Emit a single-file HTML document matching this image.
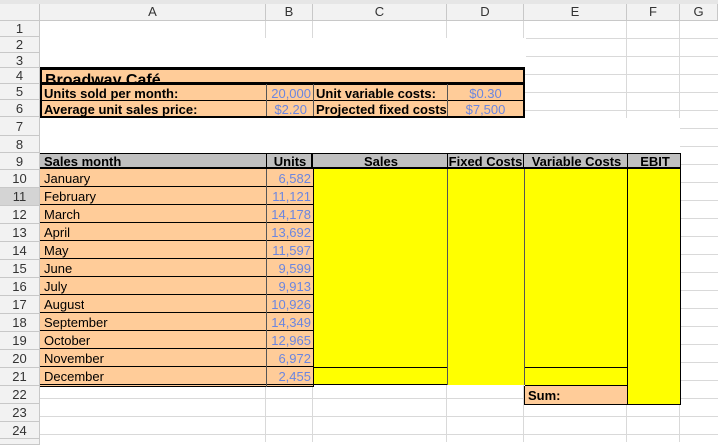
<!DOCTYPE html><html><head><style>
body{margin:0;width:718px;height:442px;overflow:hidden;background:#fff;font-family:"Liberation Sans",sans-serif;position:relative}
div{position:absolute;box-sizing:border-box}
.h{background:#f2f2f2;border-right:1px solid #c8c8c8;border-bottom:1px solid #c8c8c8;color:#333;font-size:13px;text-align:center}
.gl{background:#d4d4d4}
.c{font-size:13px;white-space:nowrap;overflow:hidden;padding-left:2px;line-height:17px}
.o{background:#ffcc99}
.y{background:#ffff00}
.g{background:#c0c0c0}
.n{color:#6b86e0;text-align:right;padding-right:2px}
.b{font-weight:bold}
</style></head><body>
<div style="left:40px;top:21px;width:678px;height:421px;background:
repeating-linear-gradient(to bottom,transparent 0,transparent 17px,#d9d9d9 17px,#d9d9d9 18px)"></div>
<div style="left:265px;top:21px;width:1px;height:421px;background:#d9d9d9"></div>
<div style="left:312px;top:21px;width:1px;height:421px;background:#d9d9d9"></div>
<div style="left:446px;top:21px;width:1px;height:421px;background:#d9d9d9"></div>
<div style="left:523px;top:21px;width:1px;height:421px;background:#d9d9d9"></div>
<div style="left:626px;top:21px;width:1px;height:421px;background:#d9d9d9"></div>
<div style="left:679px;top:21px;width:1px;height:421px;background:#d9d9d9"></div>
<div style="left:40px;top:38px;width:486px;height:30px;background:#fff"></div>
<div style="left:40px;top:118px;width:640px;height:35px;background:#fff"></div>
<div class="h" style="left:0;top:0;width:718px;height:4px;background:#e6e6e6;border:0"></div>
<div class="h" style="left:0;top:4px;width:40px;height:17px"></div>
<div class="h" style="left:40px;top:4px;width:226px;height:17px">A</div>
<div class="h" style="left:266px;top:4px;width:47px;height:17px">B</div>
<div class="h" style="left:313px;top:4px;width:134px;height:17px">C</div>
<div class="h" style="left:447px;top:4px;width:77px;height:17px">D</div>
<div class="h" style="left:524px;top:4px;width:103px;height:17px">E</div>
<div class="h" style="left:627px;top:4px;width:53px;height:17px">F</div>
<div class="h" style="left:680px;top:4px;width:38px;height:17px">G</div>
<div class="h" style="left:0;top:21px;width:40px;height:16px;line-height:16px">1</div>
<div class="h" style="left:0;top:37px;width:40px;height:16px;line-height:16px">2</div>
<div class="h" style="left:0;top:53px;width:40px;height:15px;line-height:15px">3</div>
<div class="h" style="left:0;top:68px;width:40px;height:16px;line-height:16px">4</div>
<div class="h" style="left:0;top:84px;width:40px;height:16px;line-height:16px">5</div>
<div class="h" style="left:0;top:100px;width:40px;height:17px;line-height:17px">6</div>
<div class="h" style="left:0;top:117px;width:40px;height:19px;line-height:19px">7</div>
<div class="h" style="left:0;top:136px;width:40px;height:17px;line-height:17px">8</div>
<div class="h" style="left:0;top:153px;width:40px;height:17px;line-height:17px">9</div>
<div class="h" style="left:0;top:170px;width:40px;height:18px;line-height:18px">10</div>
<div class="h gl" style="left:0;top:188px;width:40px;height:18px;line-height:18px">11</div>
<div class="h" style="left:0;top:206px;width:40px;height:18px;line-height:18px">12</div>
<div class="h" style="left:0;top:224px;width:40px;height:18px;line-height:18px">13</div>
<div class="h" style="left:0;top:242px;width:40px;height:18px;line-height:18px">14</div>
<div class="h" style="left:0;top:260px;width:40px;height:18px;line-height:18px">15</div>
<div class="h" style="left:0;top:278px;width:40px;height:18px;line-height:18px">16</div>
<div class="h" style="left:0;top:296px;width:40px;height:18px;line-height:18px">17</div>
<div class="h" style="left:0;top:314px;width:40px;height:18px;line-height:18px">18</div>
<div class="h" style="left:0;top:332px;width:40px;height:18px;line-height:18px">19</div>
<div class="h" style="left:0;top:350px;width:40px;height:18px;line-height:18px">20</div>
<div class="h" style="left:0;top:368px;width:40px;height:18px;line-height:18px">21</div>
<div class="h" style="left:0;top:386px;width:40px;height:18px;line-height:18px">22</div>
<div class="h" style="left:0;top:404px;width:40px;height:18px;line-height:18px">23</div>
<div class="h" style="left:0;top:422px;width:40px;height:17px;line-height:17px">24</div>
<div class="h" style="left:0;top:439px;width:40px;height:6px"></div>
<div class="o" style="left:40px;top:67px;width:485px;height:51px;border:2px solid #000;border-top-width:3px"></div>
<div class="c b" style="left:43px;top:70px;width:480px;height:13px;font-size:16px;line-height:21px">Broadway Café</div>
<div style="left:40px;top:82px;width:485px;height:3px;background:#000"></div>
<div style="left:42px;top:100px;width:481px;height:1px;background:#000"></div>
<div style="left:266px;top:84px;width:1px;height:32px;background:#555"></div>
<div style="left:313px;top:84px;width:1px;height:32px;background:#555"></div>
<div style="left:447px;top:84px;width:1px;height:32px;background:#555"></div>
<div class="c b" style="left:42px;top:85px;width:224px">Units sold per month:</div>
<div class="c b" style="left:42px;top:101px;width:224px">Average unit sales price:</div>
<div class="c n" style="left:266px;top:85px;width:47px">20,000</div>
<div class="c n" style="left:266px;top:101px;width:47px;padding-right:6px">$2.20</div>
<div class="c b" style="left:314px;top:85px;width:133px">Unit variable costs:</div>
<div class="c b" style="left:314px;top:101px;width:133px">Projected fixed costs</div>
<div class="c n" style="left:448px;top:85px;width:75px;text-align:center">$0.30</div>
<div class="c n" style="left:448px;top:101px;width:75px;text-align:center">$7,500</div>
<div class="g" style="left:40px;top:153px;width:641px;height:16px;border-top:1px solid #000;border-bottom:2px solid #000"></div>
<div class="c b" style="left:42px;top:153px;width:224px;line-height:18px">Sales month</div>
<div class="c b" style="left:266px;top:153px;width:47px;text-align:center;line-height:18px;border-left:1px solid #000;border-right:2px solid #000;height:16px">Units</div>
<div class="c b" style="left:313px;top:153px;width:134px;text-align:center;line-height:18px">Sales</div>
<div class="c b" style="left:447px;top:153px;width:77px;text-align:center;line-height:18px;border-left:1px solid #000;border-right:1px solid #000;height:16px;padding:0">Fixed Costs</div>
<div class="c b" style="left:524px;top:153px;width:103px;text-align:center;line-height:18px;height:16px">Variable Costs</div>
<div class="c b" style="left:627px;top:153px;width:54px;text-align:center;line-height:18px;border-left:1px solid #000;border-right:1px solid #000;height:16px">EBIT</div>
<div class="o" style="left:40px;top:169px;width:274px;height:218px;border-right:1px solid #000;border-bottom:1px solid #000;background:#ffcc99 repeating-linear-gradient(to bottom,transparent 0,transparent 17px,#000 17px,#000 18px)"></div>
<div style="left:266px;top:169px;width:1px;height:218px;background:#555"></div>
<div class="y" style="left:314px;top:169px;width:133px;height:216px;border-bottom:1px solid #000"></div>
<div style="left:314px;top:367px;width:133px;height:1px;background:#000"></div>
<div class="y" style="left:447px;top:169px;width:78px;height:216px;border-left:1px solid #555;border-right:1px solid #555"></div>
<div class="y" style="left:525px;top:169px;width:102px;height:216px"></div>
<div style="left:525px;top:367px;width:102px;height:1px;background:#000"></div>
<div style="left:525px;top:385px;width:102px;height:1px;background:#000"></div>
<div class="y" style="left:627px;top:169px;width:54px;height:236px;border-left:1px solid #000;border-right:1px solid #000;border-bottom:1px solid #000"></div>
<div class="o" style="left:524px;top:386px;width:104px;height:19px;border-left:1px solid #000;border-bottom:1px solid #000;border-right:1px solid #000"></div>
<div class="c b" style="left:526px;top:387px;width:90px">Sum:</div>
<div class="c" style="left:42px;top:170px">January</div>
<div class="c" style="left:42px;top:188px">February</div>
<div class="c" style="left:42px;top:206px">March</div>
<div class="c" style="left:42px;top:224px">April</div>
<div class="c" style="left:42px;top:242px">May</div>
<div class="c" style="left:42px;top:260px">June</div>
<div class="c" style="left:42px;top:278px">July</div>
<div class="c" style="left:42px;top:296px">August</div>
<div class="c" style="left:42px;top:314px">September</div>
<div class="c" style="left:42px;top:332px">October</div>
<div class="c" style="left:42px;top:350px">November</div>
<div class="c" style="left:42px;top:368px">December</div>
<div class="c n" style="left:266px;top:170px;width:47px">6,582</div>
<div class="c n" style="left:266px;top:188px;width:47px">11,121</div>
<div class="c n" style="left:266px;top:206px;width:47px">14,178</div>
<div class="c n" style="left:266px;top:224px;width:47px">13,692</div>
<div class="c n" style="left:266px;top:242px;width:47px">11,597</div>
<div class="c n" style="left:266px;top:260px;width:47px">9,599</div>
<div class="c n" style="left:266px;top:278px;width:47px">9,913</div>
<div class="c n" style="left:266px;top:296px;width:47px">10,926</div>
<div class="c n" style="left:266px;top:314px;width:47px">14,349</div>
<div class="c n" style="left:266px;top:332px;width:47px">12,965</div>
<div class="c n" style="left:266px;top:350px;width:47px">6,972</div>
<div class="c n" style="left:266px;top:368px;width:47px">2,455</div>
</body></html>
